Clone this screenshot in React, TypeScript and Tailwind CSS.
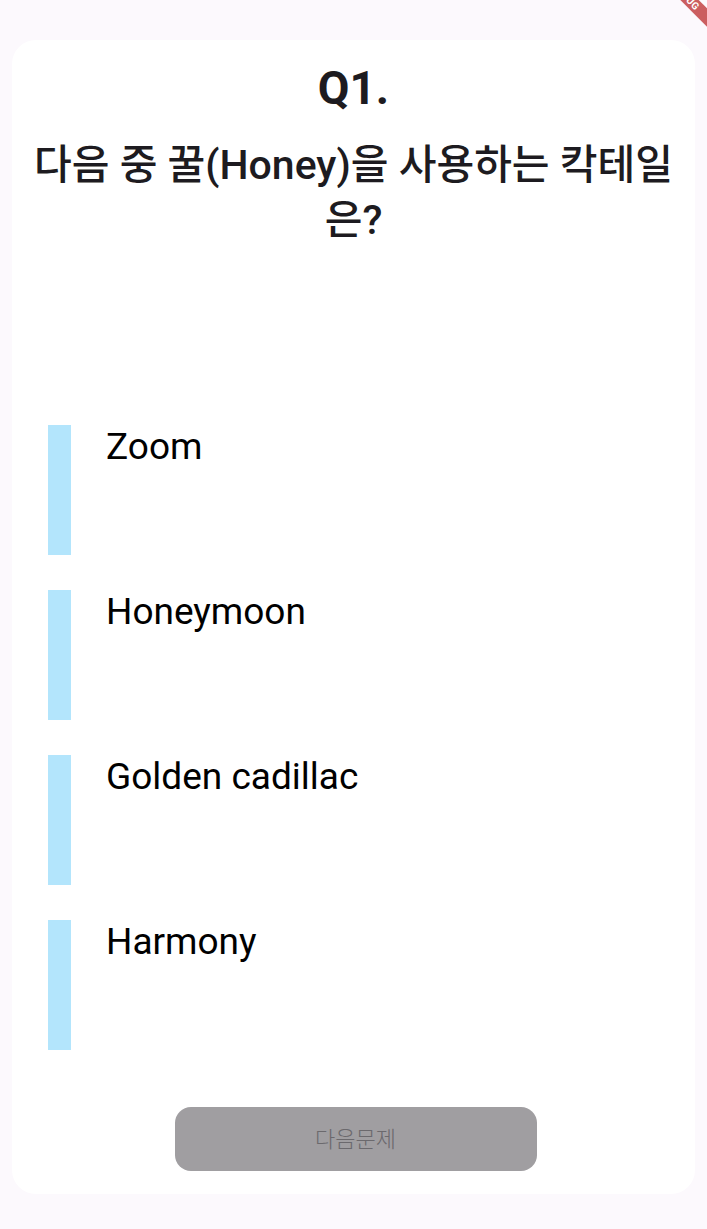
const options = ["Zoom", "Honeymoon", "Golden cadillac", "Harmony"];

function DebugBanner() {
  return (
    <div className="absolute left-[626px] top-[-10px] w-[120px] h-[13px] rotate-45 bg-[#b71c1c]/70 flex items-center justify-center pointer-events-none">
      <span className="text-white text-[10px] font-bold leading-none tracking-wide font-['Roboto',sans-serif]">
        DEBUG
      </span>
    </div>
  );
}

export default function App() {
  return (
    <div className="relative w-full h-[1229px] overflow-hidden bg-[#fcf9fd] font-['Roboto','Noto_Sans_CJK_KR',sans-serif]">
      <div className="pt-[40px] px-[12px]">
        <div className="flex flex-col h-[1154px] bg-white rounded-[24px] px-[16px] pt-[21px]">
          {/* Question header */}
          <h1 className="text-center text-[46px] leading-[1.2] font-bold text-[#1d1b20]">
            Q1.
          </h1>
          <p className="mt-[22px] text-center text-[41px] leading-[55px] font-medium text-[#1d1b20]">
            다음 중 꿀(Honey)을 사용하는 칵테일은?
          </p>

          {/* Answer options */}
          <div className="mt-[177px] flex flex-col gap-[35px] pl-[20px]">
            {options.map((opt) => (
              <div key={opt} className="flex items-start h-[130px] cursor-pointer">
                <div className="w-[23px] h-[130px] bg-[#b3e5fc] flex-shrink-0" />
                <span className="ml-[35px] text-[37px] leading-[1.2] text-black">
                  {opt}
                </span>
              </div>
            ))}
          </div>

          {/* Next button (disabled) */}
          <div className="mt-auto mb-[23px] pl-[4px] flex justify-center">
            <button
              disabled
              className="w-[362px] h-[64px] rounded-[16px] bg-[#a09ea1] text-[#6b696d] text-[22px] font-light"
            >
              다음문제
            </button>
          </div>
        </div>
      </div>
      <DebugBanner />
    </div>
  );
}
